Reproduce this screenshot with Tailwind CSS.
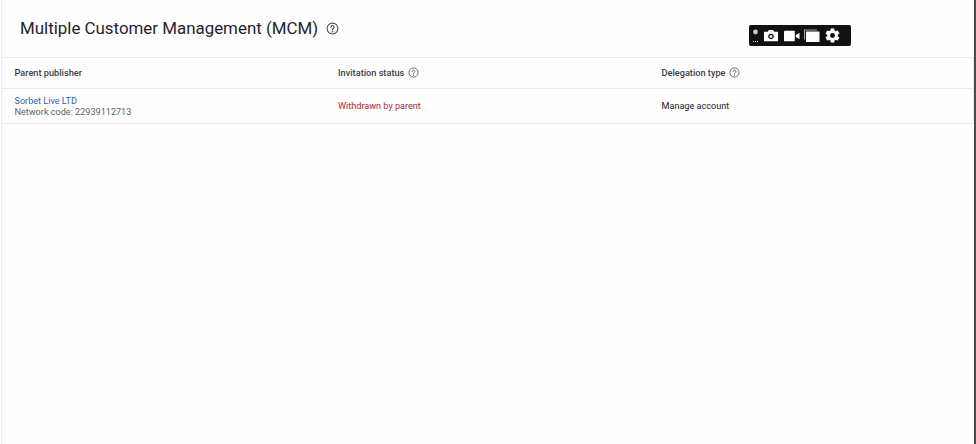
<!DOCTYPE html>
<html><head><meta charset="utf-8">
<script src="https://cdn.jsdelivr.net/npm/@tailwindcss/browser@4"></script>
</head>
<body class="m-0 bg-white overflow-hidden">
<div class="relative flex w-[976px] h-[444px] font-['Roboto',sans-serif]">
  <div class="flex-1 flex flex-col ml-[1px] border-l border-[#eeeef2] bg-[#fefefe] h-full">
    <div class="h-[57px] flex items-center pl-[18px] pb-[1px] gap-[8px]">
      <h1 class="text-[16.900px] leading-[24px] text-[#1f2430] font-normal">Multiple Customer Management (MCM)</h1>
      <svg class="w-[13px] h-[13px]" viewBox="0 0 24 24" fill="none" stroke="#4a4d52" stroke-width="2"><circle cx="12" cy="12" r="10"/><path d="M9 9.5a3 3 0 1 1 4.6 2.5c-1 .7-1.6 1.3-1.6 2.5" stroke-linecap="round"/><circle cx="12" cy="17.6" r="0.6" fill="#4a4d52"/></svg>
    </div>
    <div class="border-y border-r border-[#e8e8ee]">
      <div class="grid grid-cols-[323.500px_323.500px_1fr] h-[31px] items-center border-b border-[#e8e8ee] text-[9.200px] font-medium text-[#3c4043]">
        <div class="pl-[12.500px]">Parent publisher</div>
        <div class="flex items-center gap-[4px] pl-[12.500px]">Invitation status
          <svg class="w-[11px] h-[11px]" viewBox="0 0 24 24" fill="none" stroke="#5f6368" stroke-width="2"><circle cx="12" cy="12" r="10"/><path d="M9 9.5a3 3 0 1 1 4.6 2.5c-1 .7-1.6 1.3-1.6 2.5" stroke-linecap="round"/><circle cx="12" cy="17.6" r="0.6" fill="#5f6368"/></svg>
        </div>
        <div class="flex items-center gap-[3px] pl-[12.500px]">Delegation type
          <svg class="w-[11px] h-[11px]" viewBox="0 0 24 24" fill="none" stroke="#5f6368" stroke-width="2"><circle cx="12" cy="12" r="10"/><path d="M9 9.5a3 3 0 1 1 4.6 2.5c-1 .7-1.6 1.3-1.6 2.5" stroke-linecap="round"/><circle cx="12" cy="17.6" r="0.6" fill="#5f6368"/></svg>
        </div>
      </div>
      <div class="grid grid-cols-[323.500px_323.500px_1fr] h-[34px] pt-[1px] items-center text-[9.100px] text-[#3c4043]">
        <div class="pl-[12.500px] leading-[11px]">
          <div class="text-[#2b66ad]">Sorbet Live LTD</div>
          <div class="text-[#5f6368]">Network code: 22939112713</div>
        </div>
        <div class="pl-[12.500px] text-[#b0282e]">Withdrawn by parent</div>
        <div class="pl-[12.500px] text-[#202124]">Manage account</div>
      </div>
    </div>
  </div>
  <div class="w-[2px] h-full bg-[#4a4a4a]"></div>
  <div class="absolute left-[749px] top-[25px] w-[102px] h-[21px] bg-[#111] rounded-[2px] flex items-center pl-[3px] text-white">
    <svg class="w-[8px] h-[16px] mr-[3px]" viewBox="0 0 8 16" fill="#ccc"><circle cx="3.500" cy="4" r="2.400"/><path d="M1 13h1v1H1zM3 13h1v1H3zM5 13h1v1H5z" fill="#fff"/></svg>
    <svg class="w-[16px] h-[15px] mr-[5px]" viewBox="0 0 17 16" fill="#fff"><path fill-rule="evenodd" d="M1 4h4l1.200-2h4.600L12 4h4v10H1zM8.500 6a3 3 0 1 0 .01 0zm0 1.500a1.500 1.500 0 1 1-.01 0z"/></svg>
    <svg class="w-[16px] h-[14px] mr-[4px]" viewBox="0 0 17 14" fill="#fff"><rect x="0" y="1.500" width="11.500" height="11" rx="0.500"/><path d="M12.500 6l4-2.500v7l-4-2.500z"/></svg>
    <svg class="w-[16px] h-[15px] mr-[4px]" viewBox="0 0 16 15" fill="#fff"><path d="M0 1.500h13v1H1v9H0z" fill="#aaa"/><rect x="2" y="3.500" width="13.500" height="10.500"/></svg>
    <svg class="w-[17px] h-[17px]" viewBox="0 0 24 24" fill="#fff"><path d="M19.430 12.980c.04-.32.070-.64.070-.98s-.03-.66-.07-.98l2.110-1.650c.19-.15.240-.42.120-.64l-2-3.460c-.12-.22-.39-.3-.61-.22l-2.490 1c-.52-.4-1.080-.73-1.690-.98l-.38-2.650A.49.490 0 0 0 14 2h-4c-.25 0-.46.180-.49.420l-.38 2.650c-.61.250-1.170.59-1.690.98l-2.490-1c-.23-.09-.49 0-.61.220l-2 3.460c-.13.220-.07.490.12.640l2.110 1.650c-.04.320-.07.650-.07.980s.03.660.07.980l-2.110 1.650c-.19.150-.24.420-.12.640l2 3.460c.12.220.39.300.61.220l2.490-1c.52.400 1.080.730 1.690.980l.38 2.650c.03.240.24.420.49.420h4c.25 0 .46-.18.49-.42l.38-2.650c.61-.25 1.170-.59 1.690-.98l2.490 1c.23.090.49 0 .61-.22l2-3.460c.12-.22.070-.49-.12-.64l-2.110-1.650zM12 15.500a3.500 3.500 0 1 1 0-7 3.500 3.500 0 0 1 0 7z"/></svg>
  </div>
</div>
</body></html>
